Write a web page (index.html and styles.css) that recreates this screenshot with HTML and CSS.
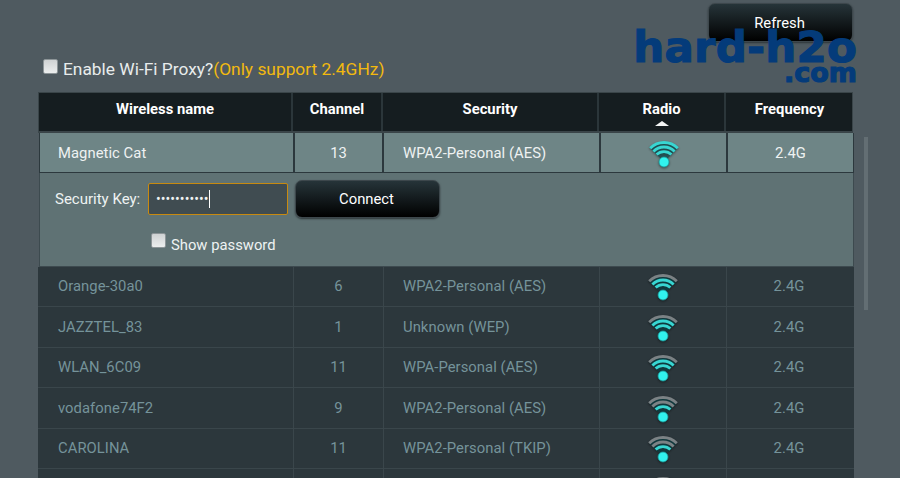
FILE: index.html
```html
<!DOCTYPE html>
<html lang="en">
<head>
<meta charset="utf-8">
<title>Wi-Fi Proxy</title>
<link rel="stylesheet" href="styles.css">
</head>
<body>
<main class="page">
  <div class="top-bar"><button class="btn btn-refresh">Refresh</button></div>
  <div class="watermark"><span class="wm-main">hard-h2o</span><span class="wm-sub">.com</span></div>
  <label class="proxy"><span class="check"></span><span>Enable Wi-Fi Proxy?</span><span class="note">(Only support 2.4GHz)</span></label>
  <div class="scroll"></div>
  <section class="table">
    <div class="head">
      <div>Wireless name</div>
      <div>Channel</div>
      <div>Security</div>
      <div class="sorted">Radio<span class="caret"></span></div>
      <div>Frequency</div>
    </div>
    <div class="row selected">
      <div class="name">Magnetic Cat</div>
      <div>13</div>
      <div class="sec">WPA2-Personal (AES)</div>
      <div><svg class="wifi" viewBox="-20 -24 40 30"><path class="fan" d="M0 0L-13.800-13.800A19.500 19.500 0 0 1 13.800-13.800Z"/><path class="on" d="M-13.800-13.800A19.500 19.500 0 0 1 13.800-13.800"/><path class="on" d="M-10.600-10.600A15 15 0 0 1 10.600-10.600"/><path class="on" d="M-7.400-7.400A10.500 10.500 0 0 1 7.400-7.400"/><circle r="5" class="dot"/></svg></div>
      <div class="freq">2.4G</div>
    </div>
    <div class="detail">
      <div class="key-row">
        <span class="key-label">Security Key:</span>
        <div class="key-input">•••••••••••<span class="cursor"></span></div>
        <button class="btn btn-connect">Connect</button>
      </div>
      <label class="show"><span class="check"></span><span>Show password</span></label>
    </div>
    <div class="row">
      <div class="name">Orange-30a0</div><div>6</div><div class="sec">WPA2-Personal (AES)</div>
      <div><svg class="wifi" viewBox="-20 -24 40 30"><path class="fan" d="M0 0L-13.800-13.800A19.500 19.500 0 0 1 13.800-13.800Z"/><path class="off" d="M-13.800-13.800A19.500 19.500 0 0 1 13.800-13.800"/><path class="on" d="M-10.600-10.600A15 15 0 0 1 10.600-10.600"/><path class="on" d="M-7.400-7.400A10.500 10.500 0 0 1 7.400-7.400"/><circle r="5" class="dot"/></svg></div>
      <div class="freq">2.4G</div>
    </div>
    <div class="row">
      <div class="name">JAZZTEL_83</div><div>1</div><div class="sec">Unknown (WEP)</div>
      <div><svg class="wifi" viewBox="-20 -24 40 30"><path class="fan" d="M0 0L-13.800-13.800A19.500 19.500 0 0 1 13.800-13.800Z"/><path class="off" d="M-13.800-13.800A19.500 19.500 0 0 1 13.800-13.800"/><path class="on" d="M-10.600-10.600A15 15 0 0 1 10.600-10.600"/><path class="on" d="M-7.400-7.400A10.500 10.500 0 0 1 7.400-7.400"/><circle r="5" class="dot"/></svg></div>
      <div class="freq">2.4G</div>
    </div>
    <div class="row">
      <div class="name">WLAN_6C09</div><div>11</div><div class="sec">WPA-Personal (AES)</div>
      <div><svg class="wifi" viewBox="-20 -24 40 30"><path class="fan" d="M0 0L-13.800-13.800A19.500 19.500 0 0 1 13.800-13.800Z"/><path class="off" d="M-13.800-13.800A19.500 19.500 0 0 1 13.800-13.800"/><path class="on" d="M-10.600-10.600A15 15 0 0 1 10.600-10.600"/><path class="on" d="M-7.400-7.400A10.500 10.500 0 0 1 7.400-7.400"/><circle r="5" class="dot"/></svg></div>
      <div class="freq">2.4G</div>
    </div>
    <div class="row">
      <div class="name">vodafone74F2</div><div>9</div><div class="sec">WPA2-Personal (AES)</div>
      <div><svg class="wifi" viewBox="-20 -24 40 30"><path class="fan" d="M0 0L-13.800-13.800A19.500 19.500 0 0 1 13.800-13.800Z"/><path class="off" d="M-13.800-13.800A19.500 19.500 0 0 1 13.800-13.800"/><path class="off" d="M-10.600-10.600A15 15 0 0 1 10.600-10.600"/><path class="on" d="M-7.400-7.400A10.500 10.500 0 0 1 7.400-7.400"/><circle r="5" class="dot"/></svg></div>
      <div class="freq">2.4G</div>
    </div>
    <div class="row">
      <div class="name">CAROLINA</div><div>11</div><div class="sec">WPA2-Personal (TKIP)</div>
      <div><svg class="wifi" viewBox="-20 -24 40 30"><path class="fan" d="M0 0L-13.800-13.800A19.500 19.500 0 0 1 13.800-13.800Z"/><path class="off" d="M-13.800-13.800A19.500 19.500 0 0 1 13.800-13.800"/><path class="off" d="M-10.600-10.600A15 15 0 0 1 10.600-10.600"/><path class="on" d="M-7.400-7.400A10.500 10.500 0 0 1 7.400-7.400"/><circle r="5" class="dot"/></svg></div>
      <div class="freq">2.4G</div>
    </div>
    <div class="row">
      <div class="name"></div><div></div><div class="sec"></div>
      <div><svg class="wifi" viewBox="-20 -24 40 30"><path class="fan" d="M0 0L-13.800-13.800A19.500 19.500 0 0 1 13.800-13.800Z"/><path class="off" d="M-13.800-13.800A19.500 19.500 0 0 1 13.800-13.800"/><path class="off" d="M-10.600-10.600A15 15 0 0 1 10.600-10.600"/><path class="on" d="M-7.400-7.400A10.500 10.500 0 0 1 7.400-7.400"/><circle r="5" class="dot"/></svg></div>
      <div></div>
    </div>
  </section>
</main>
</body>
</html>
```
FILE: styles.css
```css
* { box-sizing: border-box; }
html, body { margin: 0; height: 478px; overflow: hidden; }
body {
  background: #4f5a60;
  font-family: Roboto, "Liberation Sans", sans-serif;
  color: #fff;
}
.page { position: relative; width: 900px; height: 478px; padding: 3px 0 0 38px; overflow: hidden; }
.top-bar { display: flex; justify-content: flex-end; width: 815px; height: 39px; }
.btn {
  border: 1px solid #3d474c;
  border-radius: 7px;
  background: linear-gradient(#263439, #000);
  color: #fff;
  font: 14.800px Roboto, sans-serif;
  box-shadow: 0 1px 2px #2e363a;
  padding: 0 2px 0 0;
}
.btn-refresh { width: 145px; height: 39px; }
.watermark {
  position: absolute; left: 633px; top: 30px; width: 224px;
  display: flex; flex-direction: column; align-items: flex-end;
  font-family: "DejaVu Sans", sans-serif; font-weight: 700; color: #043b7a;
  -webkit-text-stroke: 1.200px #043b7a;
}
.wm-main { font-size: 43.500px; line-height: 34px; letter-spacing: 0.2px; }
.wm-sub { font-size: 27px; line-height: 20px; margin-top: -1px; }
.proxy { display: flex; align-items: center; height: 26px; margin-top: 14px; font-size: 17.350px; color: #e8ecec; }
.proxy .check { margin: -6px 5px 0 5px; }
.note { color: #f2b90f; }
.check {
  display: block; width: 15px; height: 15px; border-radius: 2px;
  background: linear-gradient(#cfd2d3, #eceeee); border: 1px solid #8d9598;
}
.scroll { position: absolute; left: 864px; top: 137px; width: 4px; height: 173px; background: #636e73; }
.table { width: 816px; margin-top: 10px; }
.head {
  display: grid; grid-template-columns: 254px 90px 216px 127px 127px; width: 815px; height: 41px;
  background: #151d20; border: 1px solid #3a4549; border-bottom-width: 2px;
}
.head > div {
  display: flex; flex-direction: column; align-items: center; padding-top: 7px;
  font-size: 14.800px; font-weight: 700; line-height: 18px; border-right: 2px solid #2b363a;
}
.head > div:last-child { border-right: 0; }
.caret {
  width: 0; height: 0; margin-top: 3px;
  border-left: 7px solid transparent; border-right: 7px solid transparent; border-bottom: 5px solid #f3f5f5;
}
.row {
  display: grid; grid-template-columns: 256px 90px 216px 127px 127px; height: 40.500px;
  background: #2c373c; color: #75939a; font-size: 14.800px; letter-spacing: 0.050px; border-bottom: 1px solid #3a464b;
}
.row > div { display: flex; align-items: center; justify-content: center; border-right: 1px solid #3a464b; }
.row > div:last-child { border-right: 0; }
.row > .name { justify-content: flex-start; padding-left: 20px; }
.row > .sec { justify-content: flex-start; padding-left: 19px; }
.row > .freq { padding-right: 3px; }
.selected {
  grid-template-columns: 255px 89px 217px 127px 127px;
  height: 40px; margin-left: 1px; width: 815px; background: #6e8586; color: #eef2f2;
  border: 1px solid #2c383d; border-top: 0;
}
.selected > div { border-right: 2px solid #2c383d; }
.row.selected > .name { padding-left: 18px; }
.row.selected > .freq { padding-right: 2px; }
.wifi { width: 40px; height: 30px; fill: none; filter: drop-shadow(0 1px 1px rgba(0, 0, 0, 0.45)) blur(0.350px); }
.wifi path { stroke-width: 2.800px; }
.wifi .fan { fill: rgba(8, 70, 75, 0.6); stroke: none; }
.wifi .on { stroke: #38d6d2; }
.wifi .off { stroke: #7b8285; }
.wifi .dot { fill: #31f2ee; stroke: #1a9c9c; stroke-width: 0.800px; }
.detail {
  width: 815px; height: 93.500px; margin-left: 1px; background: #5f7274; color: #eef2f2;
  border: 1px solid #3d4a4f; border-top: 0;
  padding: 6px 0 0 15px; font-size: 15px;
}
.key-row { display: flex; align-items: center; height: 39px; }
.key-label { width: 93px; }
.key-input {
  display: flex; align-items: center; width: 140px; height: 32px; padding-left: 7px;
  background: #404c51; border: 1px solid #c88a10; border-radius: 2px; letter-spacing: 0.050px; font-size: 14px;
}
.cursor { width: 1px; height: 18px; background: #fff; }
.btn-connect { width: 145px; height: 38px; margin-left: 7px; }
.show { display: flex; align-items: flex-start; margin: 18px 0 0 96px; font-size: 14.800px; }
.show .check { margin: -3px 5px 0 0; }
```
